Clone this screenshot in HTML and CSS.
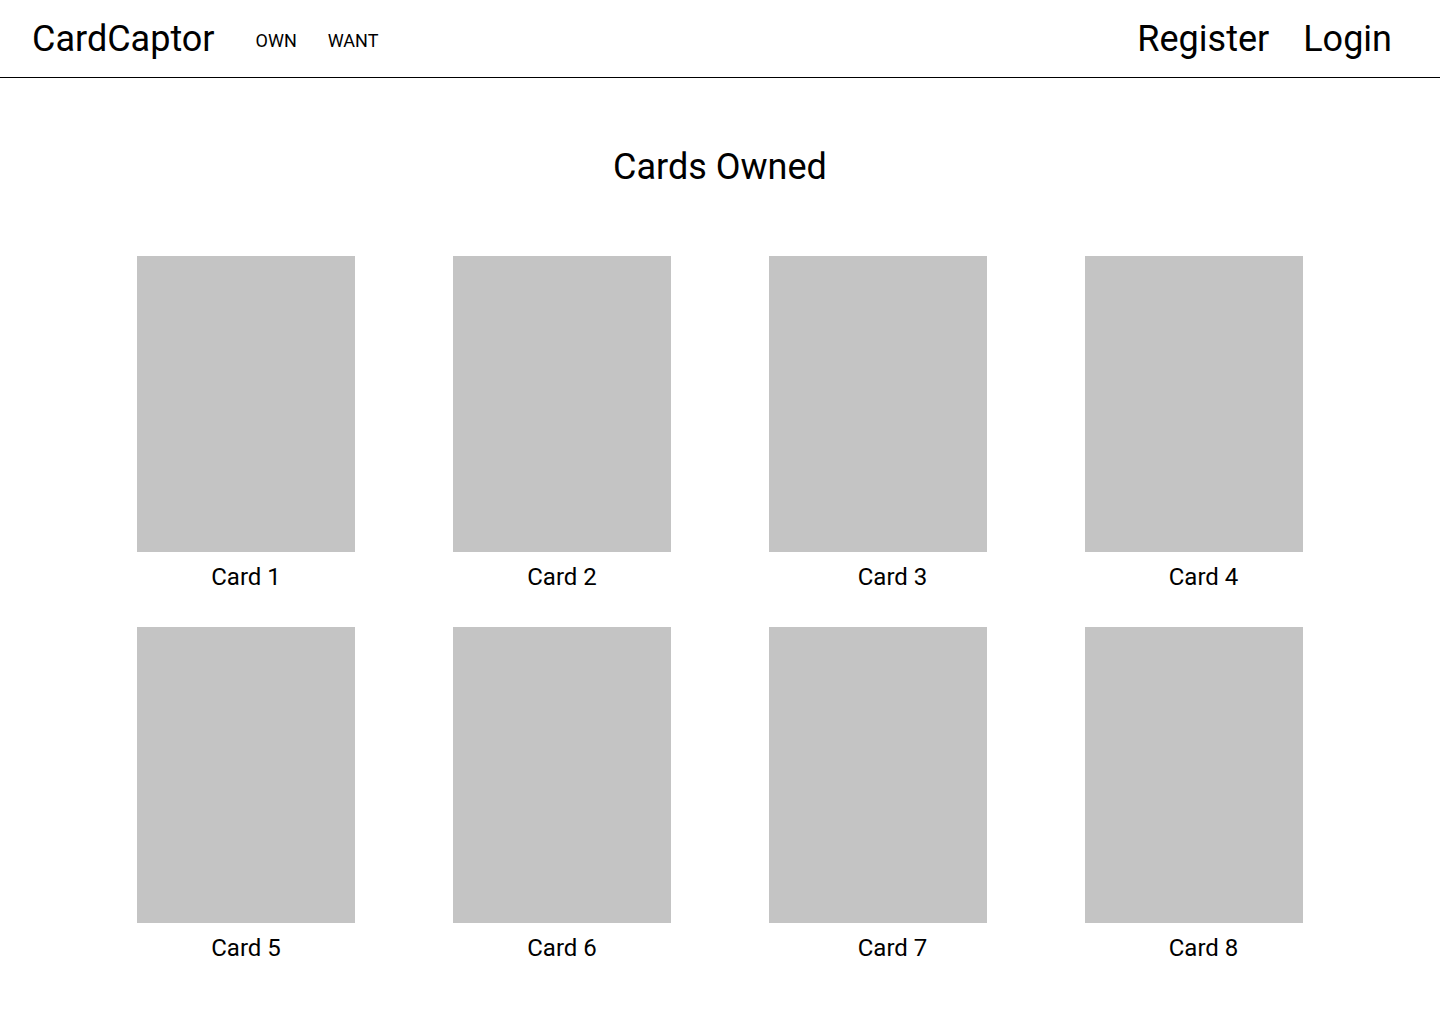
FILE: index.html
```
<!DOCTYPE html>
<html lang="en">
<head>
<meta charset="utf-8">
<title>CardCaptor</title>
<link rel="stylesheet" href="styles.css">
</head>
<body>
<header class="topbar">
  <div class="brand-group">
    <a class="brand" href="#">CardCaptor</a>
    <nav class="nav">
      <a class="nav-link" href="#">OWN</a>
      <a class="nav-link" href="#">WANT</a>
    </nav>
  </div>
  <div class="auth">
    <a class="auth-link" href="#">Register</a>
    <a class="auth-link" href="#">Login</a>
  </div>
</header>
<main class="content">
  <h1 class="title">Cards Owned</h1>
  <section class="grid">
    <div class="card"><div class="card-img"></div><div class="card-label">Card 1</div></div>
    <div class="card"><div class="card-img"></div><div class="card-label">Card 2</div></div>
    <div class="card"><div class="card-img"></div><div class="card-label shift-a">Card 3</div></div>
    <div class="card"><div class="card-img"></div><div class="card-label shift-b">Card 4</div></div>
    <div class="card"><div class="card-img"></div><div class="card-label">Card 5</div></div>
    <div class="card"><div class="card-img"></div><div class="card-label">Card 6</div></div>
    <div class="card"><div class="card-img"></div><div class="card-label shift-a">Card 7</div></div>
    <div class="card"><div class="card-img"></div><div class="card-label shift-b">Card 8</div></div>
  </section>
</main>
</body>
</html>
```
FILE: styles.css
```
* { box-sizing: border-box; }
html, body { margin: 0; padding: 0; background: #fff; }
body {
  font-family: Roboto, "Liberation Sans", sans-serif;
  color: #000;
}
a { color: inherit; text-decoration: none; }

.topbar {
  height: 78px;
  border-bottom: 1px solid #000;
  display: flex;
  align-items: center;
  justify-content: space-between;
  padding: 0 48px 0 32px;
}
.brand-group {
  display: flex;
  align-items: center;
}
.brand {
  font-size: 36px;
  line-height: 42px;
}
.nav {
  display: flex;
  gap: 31px;
  margin-left: 41px;
  padding-top: 4px;
}
.nav-link {
  font-size: 18px;
  line-height: 22px;
}
.auth {
  display: flex;
  gap: 34px;
}
.auth-link {
  font-size: 36px;
  line-height: 42px;
}

.content {
  display: flex;
  flex-direction: column;
  align-items: center;
}
.title {
  margin: 68px 0 0;
  font-size: 36px;
  line-height: 42px;
  font-weight: 400;
}
.grid {
  margin-top: 68px;
  display: grid;
  grid-template-columns: repeat(4, 218px);
  column-gap: 98px;
  row-gap: 36px;
}
.card {
  display: flex;
  flex-direction: column;
}
.card-img {
  width: 218px;
  height: 296px;
  background: #c4c4c4;
}
.card-label {
  margin-top: 11px;
  font-size: 24px;
  line-height: 28px;
  text-align: center;
}
.shift-a { padding-left: 29px; }
.shift-b { padding-left: 19px; }
```
